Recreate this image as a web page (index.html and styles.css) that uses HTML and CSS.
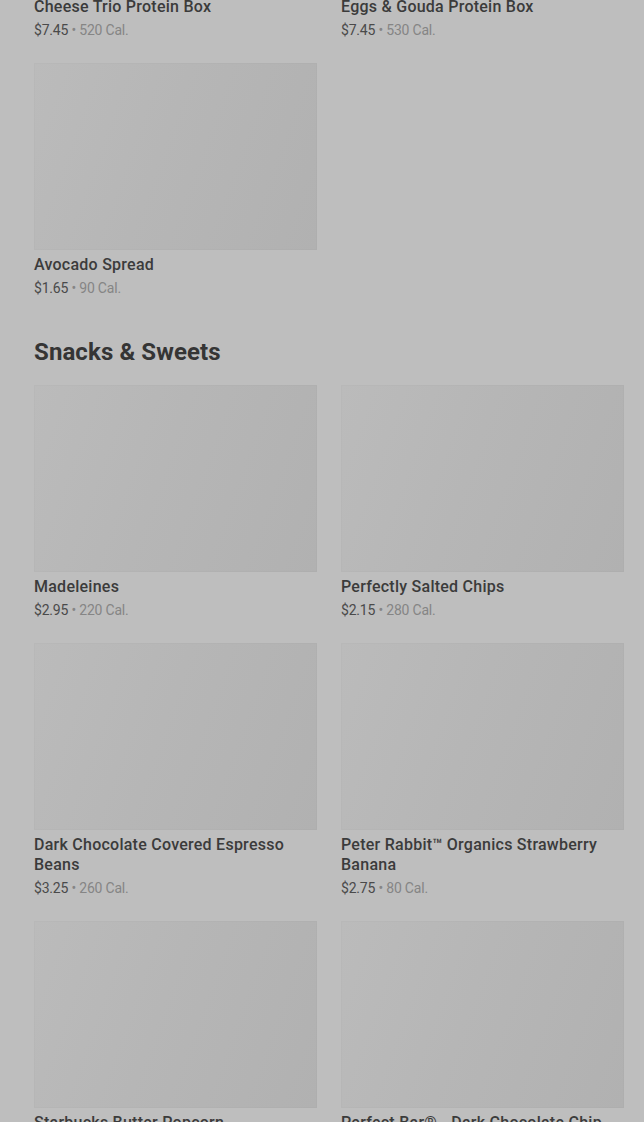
FILE: index.html
```html
<!DOCTYPE html>
<html>
<head>
<meta charset="utf-8">
<link rel="stylesheet" href="styles.css">
</head>
<body>
<main class="page">
  <section class="section">
    <div class="grid">
      <div class="card"><div class="thumb"></div><div class="title">Cheese Trio Protein Box</div><div class="meta"><span class="price">$7.45</span> <span class="cal">• 520 Cal.</span></div></div>
      <div class="card"><div class="thumb"></div><div class="title">Eggs &amp; Gouda Protein Box</div><div class="meta"><span class="price">$7.45</span> <span class="cal">• 530 Cal.</span></div></div>
      <div class="card"><div class="thumb"></div><div class="title">Avocado Spread</div><div class="meta"><span class="price">$1.65</span> <span class="cal">• 90 Cal.</span></div></div>
    </div>
  </section>
  <section class="section">
    <h2 class="heading">Snacks &amp; Sweets</h2>
    <div class="grid">
      <div class="card"><div class="thumb"></div><div class="title">Madeleines</div><div class="meta"><span class="price">$2.95</span> <span class="cal">• 220 Cal.</span></div></div>
      <div class="card"><div class="thumb"></div><div class="title">Perfectly Salted Chips</div><div class="meta"><span class="price">$2.15</span> <span class="cal">• 280 Cal.</span></div></div>
      <div class="card"><div class="thumb"></div><div class="title">Dark Chocolate Covered Espresso Beans</div><div class="meta"><span class="price">$3.25</span> <span class="cal">• 260 Cal.</span></div></div>
      <div class="card"><div class="thumb"></div><div class="title">Peter Rabbit™ Organics Strawberry Banana</div><div class="meta"><span class="price">$2.75</span> <span class="cal">• 80 Cal.</span></div></div>
      <div class="card"><div class="thumb"></div><div class="title">Starbucks Butter Popcorn</div><div class="meta"><span class="price">$2.45</span> <span class="cal">• 190 Cal.</span></div></div>
      <div class="card"><div class="thumb"></div><div class="title">Perfect Bar® - Dark Chocolate Chip Peanut Butter</div><div class="meta"><span class="price">$2.95</span> <span class="cal">• 330 Cal.</span></div></div>
    </div>
  </section>
</main>
</body>
</html>
```
FILE: styles.css
```css
html, body {
  margin: 0;
  padding: 0;
  background: #bebebe;
  overflow: hidden;
}
body {
  font-family: Roboto, "Liberation Sans", Arial, sans-serif;
  color: #3a3a3a;
}
.page {
  margin-top: -195px;
  padding: 0 20px 0 34px;
}
.section {
  display: flex;
  flex-direction: column;
}
.section + .section {
  margin-top: 40px;
}
.heading {
  margin: 0 0 19px 0;
  font-size: 24px;
  line-height: 28px;
  font-weight: 700;
  color: #353535;
  letter-spacing: 0.1px;
}
.grid {
  display: grid;
  grid-template-columns: 283px 283px;
  column-gap: 24px;
  row-gap: 23px;
}
.card {
  display: flex;
  flex-direction: column;
}
.thumb {
  height: 187px;
  background: linear-gradient(110deg, #bbbbbb 0%, #b6b6b6 45%, #b1b1b1 100%);
  box-shadow: inset 0 0 0 1px rgba(0,0,0,0.015);
}
.title {
  margin-top: 5px;
  font-size: 16px;
  line-height: 20px;
  font-weight: 500;
  color: #3b3b3b;
  letter-spacing: 0.25px;
}
.meta {
  margin-top: 3px;
  font-size: 14px;
  line-height: 20px;
  letter-spacing: -0.2px;
}
.price {
  color: #4a4a4a;
}
.cal {
  color: #858585;
}
```
